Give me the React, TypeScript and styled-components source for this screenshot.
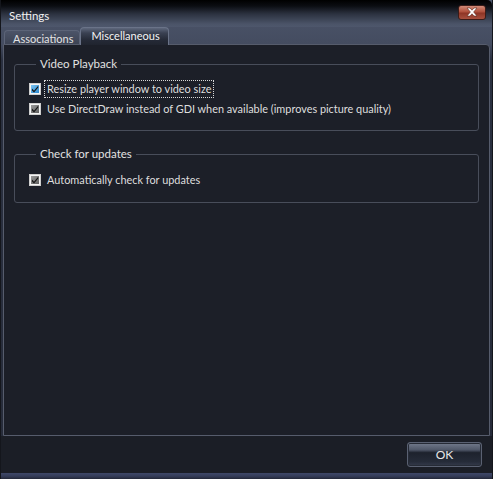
import React from "react";
import styled, { createGlobalStyle } from "styled-components";

const Global = createGlobalStyle`
  html, body { margin: 0; padding: 0; background: #1b1e26; }
  body { font-family: Lato, "Liberation Sans", Arial, sans-serif; }
  * { box-sizing: border-box; }
`;

const Window = styled.div`
  width: 493px;
  height: 479px;
  display: flex;
  flex-direction: column;
  background: linear-gradient(#4e576c 0px, #444c60 44px, #2a3040 60px, #262b39 100%);
  border-left: 1px solid #14161c;
  border-right: 1px solid #14161c;
  overflow: hidden;
`;

const TitleBar = styled.div`
  height: 27px;
  flex: none;
  display: flex;
  align-items: center;
  justify-content: space-between;
  padding: 0 6px 0 8px;
  background: linear-gradient(#000000 0px, #0b0d12 6px, #2c3240 14px, #4b5468 24px, #4e576c 27px);
  border-top-right-radius: 5px;
`;

const Title = styled.span`
  color: #f2f2f2;
  font-size: 11.5px;
  margin-top: 3px;
`;

const CloseButton = styled.div`
  width: 28px;
  height: 15px;
  margin-top: -3px;
  border-radius: 3px;
  border: 1px solid #3a1c18;
  background: linear-gradient(#d08a78 0%, #b0503c 45%, #8e3526 55%, #a8503e 100%);
  display: flex;
  align-items: center;
  justify-content: center;
`;

const TabStrip = styled.div`
  height: 17px;
  flex: none;
  display: flex;
  align-items: flex-end;
  padding-left: 3px;
`;

const Tab = styled.div<{ $active?: boolean }>`
  height: ${(p) => (p.$active ? "18px" : "14px")};
  margin-bottom: ${(p) => (p.$active ? "-1px" : "0")};
  padding: ${(p) => (p.$active ? "1px 8px 0 10px" : "1px 6px 0 8px")};
  display: flex;
  align-items: ${(p) => (p.$active ? "flex-start" : "center")};
  font-size: 11px;
  color: ${(p) => (p.$active ? "#f4f4f4" : "#e4e4e4")};
  border: 1px solid ${(p) => (p.$active ? "#6a7388" : "#5c6478")};
  border-bottom: none;
  border-radius: 4px 4px 0 0;
  background: ${(p) =>
    p.$active
      ? "linear-gradient(#5e677c 0px, #3a4152 5px, #252a37 12px, #1f232d 18px)"
      : "linear-gradient(#4c5468, #3c4354)"};
  position: relative;
  z-index: ${(p) => (p.$active ? 2 : 1)};
`;

const Panel = styled.div`
  flex: 1;
  margin: 0 2px 0 2px;
  border: 1px solid #565c6c;
  border-radius: 0 4px 0 0;
  background: #1c1f28;
  padding: 12px 10px 0 10px;
  display: flex;
  flex-direction: column;
  gap: 16px;
  position: relative;
  z-index: 1;
`;

const Group = styled.fieldset<{ $padTop: number; $padBottom: number }>`
  margin: 0;
  border: 1px solid #484d5a;
  border-radius: 3px;
  padding: ${(p) => `${p.$padTop}px 10px ${p.$padBottom}px 14px`};
  display: flex;
  flex-direction: column;
`;

const Legend = styled.legend`
  color: #e2e2e2;
  font-size: 11.5px;
  line-height: 14px;
  padding: 0 4px;
  margin-left: 7px;
`;

const Row = styled.label`
  height: 20px;
  display: flex;
  align-items: center;
  gap: 4px;
  color: #dedede;
  font-size: 10.9px;
`;

const Label = styled.span<{ $focused?: boolean }>`
  padding: 1px 2px 2px 2px;
  line-height: 13px;
  outline: ${(p) => (p.$focused ? "1px dotted #d8d8d8" : "none")};
`;

const Footer = styled.div`
  height: 37px;
  flex: none;
  display: flex;
  align-items: center;
  justify-content: flex-end;
  padding: 0 10px 0 0;
  background: #1b1e26;
`;

const OkButton = styled.div`
  width: 75px;
  height: 25px;
  border: 1px solid #5a6172;
  border-radius: 3px;
  background: linear-gradient(#737b8c 0%, #4f5768 30%, #1d222d 42%, #252b38 80%, #343b4b 100%);
  color: #e8e8e8;
  font-size: 12px;
  display: flex;
  align-items: center;
  justify-content: center;
  box-shadow: inset 0 0 0 1px #262b36;
`;

const BottomEdge = styled.div`
  height: 6px;
  flex: none;
  background: linear-gradient(#3f4868 0px, #353d5a 3px, #242838 6px);
`;

function CheckBox({ blue }: { blue?: boolean }) {
  return (
    <svg width="12" height="12" viewBox="0 0 12 12">
      <defs>
        <linearGradient id={blue ? "cbBlue" : "cbGray"} x1="0" y1="0" x2="1" y2="1">
          {blue ? (
            <>
              <stop offset="0" stopColor="#7cc4f2" />
              <stop offset="1" stopColor="#2a86cc" />
            </>
          ) : (
            <>
              <stop offset="0" stopColor="#9a9a9a" />
              <stop offset="1" stopColor="#5e5e5e" />
            </>
          )}
        </linearGradient>
      </defs>
      <rect x="0.5" y="0.5" width="11" height="11" fill="#f4f4f4" stroke="#cfcfcf" />
      <rect x="2" y="2" width="8" height="8" fill={`url(#${blue ? "cbBlue" : "cbGray"})`} />
      <path d="M3 5.6 L5 7.8 L9.2 2.8 L9.2 4.6 L5 9.6 L3 7.4 Z" fill="#141414" />
    </svg>
  );
}

function CloseIcon() {
  return (
    <svg width="14" height="10" viewBox="0 0 14 10">
      <path
        d="M2 1 L5 1 L7 3.2 L9 1 L12 1 L8.6 5 L12 9 L9 9 L7 6.8 L5 9 L2 9 L5.4 5 Z"
        fill="#ffffff"
        stroke="#5a2a20"
        strokeWidth="0.6"
      />
    </svg>
  );
}

export default function App() {
  return (
    <>
      <Global />
      <Window>
        <TitleBar>
          <Title>Settings</Title>
          <CloseButton>
            <CloseIcon />
          </CloseButton>
        </TitleBar>
        <TabStrip>
          <Tab>Associations</Tab>
          <Tab $active>Miscellaneous</Tab>
        </TabStrip>
        <Panel>
          <Group $padTop={8} $padBottom={11}>
            <Legend>Video Playback</Legend>
            <Row>
              <CheckBox blue />
              <Label $focused>Resize player window to video size</Label>
            </Row>
            <Row>
              <CheckBox />
              <Label>Use DirectDraw instead of GDI when available (improves picture quality)</Label>
            </Row>
          </Group>
          <Group $padTop={9} $padBottom={12}>
            <Legend>Check for updates</Legend>
            <Row>
              <CheckBox />
              <Label>Automatically check for updates</Label>
            </Row>
          </Group>
        </Panel>
        <Footer>
          <OkButton>OK</OkButton>
        </Footer>
        <BottomEdge />
      </Window>
    </>
  );
}
